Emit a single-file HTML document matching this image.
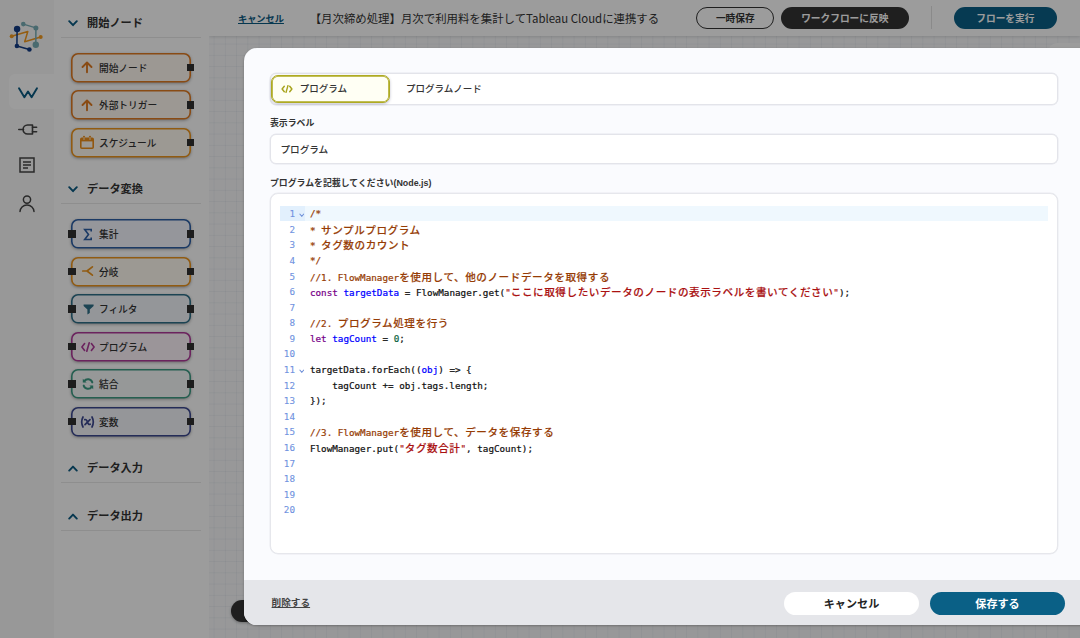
<!DOCTYPE html>
<html lang="ja">
<head>
<meta charset="utf-8">
<title>プログラムノード</title>
<style>
*{box-sizing:border-box;margin:0;padding:0}
html,body{width:1080px;height:638px;overflow:hidden;background:#f6f7fa}
body{font-family:"Liberation Sans","Noto Sans CJK JP",sans-serif;color:#333;position:relative}
.jp{font-family:"Noto Sans CJK JP","Liberation Sans",sans-serif}
#app{position:absolute;left:0;top:0;width:1080px;height:638px;overflow:hidden}
/* icon bar */
.iconbar{position:absolute;left:0;top:0;width:54px;height:638px;background:#f9f9f9}
.iconbar .active{position:absolute;left:9px;top:74px;width:45px;height:35px;background:#fff;border-radius:6px 0 0 6px}
.iconbar svg{position:absolute;overflow:visible}
/* node panel */
.panel{position:absolute;left:53px;top:0;width:155.6px;height:638px;background:#fff}
.sec{position:absolute;left:8px;width:140px;height:31px;border-bottom:1px solid #e9e9e9}
.sec .t{position:absolute;left:26px;top:0;font-size:11.2px;font-weight:700;color:#333;line-height:31px;white-space:nowrap;font-family:"Noto Sans CJK JP",sans-serif}
.sec svg{position:absolute;left:7px;top:13px}
.node{position:absolute;left:18px;width:120px;height:29.6px}
.node .l{position:absolute;left:28px;top:0;line-height:30.6px;font-size:9.7px;font-weight:500;color:#333;white-space:nowrap;font-family:"Noto Sans CJK JP",sans-serif}
.node svg.bd{position:absolute;left:0;top:0;overflow:visible;filter:drop-shadow(0 1.5px 1.6px rgba(0,0,0,.32))}
.node svg.ic{position:absolute;left:10.5px;top:8.5px;overflow:visible}
.node i{position:absolute;width:7.4px;height:7.4px;background:#303030;top:11.3px}
.node i.r{left:116px}
.node i.lf{left:-2.7px}
/* topbar */
.topbar{position:absolute;left:209px;top:0;width:871px;height:36px;background:#fff;box-shadow:0 1px 3px rgba(0,0,0,.13)}
.topbar .cancel{position:absolute;left:29px;top:0;line-height:36px;font-size:9.2px;font-weight:700;color:#0a5a82;text-decoration:underline;font-family:"Noto Sans CJK JP",sans-serif}
.topbar .title{position:absolute;left:100.7px;top:0;line-height:36px;font-size:11.42px;color:#333;white-space:nowrap;font-family:"Noto Sans CJK JP",sans-serif}
.pill{position:absolute;top:6.7px;height:22.4px;border-radius:12px;font-size:9.7px;font-weight:700;text-align:center;line-height:21px;font-family:"Noto Sans CJK JP",sans-serif;white-space:nowrap}
.canvas{position:absolute;left:209px;top:36px;width:871px;height:602px;background-color:#f8f9fb;
background-image:linear-gradient(to right,rgba(110,120,150,.07) 1px,transparent 1px),linear-gradient(to bottom,rgba(110,120,150,.07) 1px,transparent 1px);background-size:11.25px 11.25px;background-position:4.6px 7.6px}
.overlay{position:absolute;left:0;top:0;width:1080px;height:638px;background:rgba(0,0,0,.39)}
/* modal */
.modal{position:absolute;left:244px;top:48px;width:860px;height:577px;background:#fafbfe;border-radius:13px;box-shadow:0 1px 2.5px rgba(0,0,0,.28);overflow:hidden}
.tabs{position:absolute;left:26px;top:25px;width:788px;height:31.5px;border:1px solid #e3e4ea;border-radius:6px;background:#fff;box-shadow:0 0 0 .45px #e6e7ed}
.tab-on{position:absolute;left:.2px;top:.6px;width:119px;height:28px;border:1px solid #aeaa22;border-radius:7px;background:#fffff4;box-shadow:inset 0 0 0 .8px #aeaa22,0 1px 3px rgba(40,40,90,.28)}
.tabs .tx{position:absolute;top:0;line-height:29px;font-size:9.5px;font-weight:500;color:#333;white-space:nowrap;font-family:"Noto Sans CJK JP",sans-serif}
.lab{position:absolute;left:26px;font-size:8.9px;font-weight:700;color:#333;white-space:nowrap;line-height:12px;font-family:"Liberation Sans","Noto Sans CJK JP",sans-serif}
.inp{position:absolute;left:26px;top:86px;width:788px;height:30px;border:1px solid #e3e4ea;border-radius:6px;background:#fff;box-shadow:0 0 0 .45px #e6e7ed;font-size:9.65px;font-weight:500;line-height:28.6px;padding-left:9.4px;color:#333;font-family:"Noto Sans CJK JP",sans-serif}
.editor{position:absolute;left:26px;top:145px;width:788px;height:361px;border:1px solid #e6e7ec;border-radius:8px;background:#fff;box-shadow:0 0 0 .45px #e9eaef}
.foot{position:absolute;left:0;top:532px;width:860px;height:45px;background:#e5e6ea}
.foot .del{position:absolute;left:27.6px;top:0;line-height:45px;font-size:9.65px;font-weight:700;color:#444;text-decoration:underline;font-family:"Noto Sans CJK JP",sans-serif}
.fbtn{position:absolute;top:11.5px;height:23px;border-radius:12px;font-size:11.1px;font-weight:700;text-align:center;line-height:23.4px;font-family:"Noto Sans CJK JP",sans-serif}
/* code */
.code{position:absolute;left:8.6px;top:11.7px;width:768.4px;font-family:"DejaVu Sans Mono","Liberation Mono","Noto Sans CJK JP",monospace;font-size:9.27px;line-height:15.59px;color:#111;-webkit-text-stroke:.22px currentColor}
.ln{position:relative;height:15.59px;white-space:pre}
.ln.act{background:linear-gradient(to right,#e2f0fd 25px,#eff8fe 25px)}
.ln b{position:absolute;left:0;top:.6px;width:15.4px;text-align:right;font-weight:400;color:#6f92e0;-webkit-text-stroke:.1px currentColor}
.ln svg{position:absolute;left:19.2px;top:7.3px}
.ln span.c{position:absolute;left:30.3px;top:.6px}
.j{font-family:"Noto Sans CJK JP",sans-serif;font-weight:500;font-size:10.6px;letter-spacing:.55px;-webkit-text-stroke:.14px currentColor}
.cm{color:#963c05}.kw{color:#770088}.df{color:#0000ff}.st{color:#aa1111}.nu{color:#116644}
</style>
</head>
<body>
<div id="app">
  <div class="canvas"><div style="position:absolute;left:22px;top:564px;width:120px;height:22.4px;border-radius:11.2px;background:#333;box-shadow:0 1px 3px rgba(0,0,0,.3)"></div><div style="position:absolute;left:838.5px;top:6.6px;width:60px;height:60px;border-radius:9px;background:#fff"></div></div>
  <div class="topbar" id="topbar">
    <span class="cancel">キャンセル</span>
    <span class="title">【月次締め処理】月次で利用料を集計してTableau Cloudに連携する</span>
    <div class="pill" style="left:487.3px;width:78px;border:1px solid #333;color:#333">一時保存</div>
    <div class="pill" style="left:572px;width:127.5px;background:#333;color:#fff;line-height:22.4px">ワークフローに反映</div>
    <div style="position:absolute;left:722px;top:6px;width:1px;height:23px;background:#e2e2e2"></div>
    <div class="pill" style="left:744.5px;width:103.7px;background:#0a6086;color:#fff;line-height:22.4px">フローを実行</div>
  </div>
  <div class="panel" id="panel">
    <div class="sec" style="top:7px"><svg width="10" height="7" viewBox="0 0 10 7"><path d="M1.2 1.2 L5 5.2 L8.8 1.2" fill="none" stroke="#0a5a82" stroke-width="1.9" stroke-linecap="round" stroke-linejoin="round"/></svg><span class="t">開始ノード</span></div>
    <div class="node" style="top:52.5px"><svg class="bd" width="120" height="29.6"><rect x=".8" y=".8" width="118.4" height="28" rx="6.2" fill="#fff8f1" stroke="#e07b22" stroke-width="1.6"/></svg><svg class="ic" style="margin-left:-.7px" width="12" height="12" viewBox="0 0 12 12"><path d="M6 11.2 V1.8 M1.5 6 L6 1.5 L10.5 6" fill="none" stroke="#e07b22" stroke-width="1.9" stroke-linecap="round" stroke-linejoin="round"/></svg><span class="l">開始ノード</span><i class="r"></i></div>
    <div class="node" style="top:90px"><svg class="bd" width="120" height="29.6"><rect x=".8" y=".8" width="118.4" height="28" rx="6.2" fill="#fff8f1" stroke="#e07b22" stroke-width="1.6"/></svg><svg class="ic" style="margin-left:-.7px" width="12" height="12" viewBox="0 0 12 12"><path d="M6 11.2 V1.8 M1.5 6 L6 1.5 L10.5 6" fill="none" stroke="#e07b22" stroke-width="1.9" stroke-linecap="round" stroke-linejoin="round"/></svg><span class="l">外部トリガー</span><i class="r"></i></div>
    <div class="node" style="top:127.5px"><svg class="bd" width="120" height="29.6"><rect x=".8" y=".8" width="118.4" height="28" rx="6.2" fill="#fffaf0" stroke="#ee951c" stroke-width="1.6"/></svg><svg class="ic" style="margin-left:-1.2px;margin-top:-.3px" width="14" height="13" viewBox="0 0 14 13"><rect x=".8" y="2.400" width="12.400" height="9.800" rx="1" fill="none" stroke="#ee8f1a" stroke-width="1.600"/><path d="M.8 2.400 H13.200 V5.400 H.8 Z" fill="#ee8f1a"/><path d="M4 .9 V2.200 M10 .9 V2.200" stroke="#ee8f1a" stroke-width="2.200" stroke-linecap="round"/><path d="M4 1.300 V3.600 M10 1.300 V3.600" stroke="#fff4e4" stroke-width=".9" stroke-linecap="round"/></svg><span class="l">スケジュール</span><i class="r"></i></div>
    <div class="sec" style="top:173px"><svg width="10" height="7" viewBox="0 0 10 7"><path d="M1.2 1.2 L5 5.2 L8.8 1.2" fill="none" stroke="#0a5a82" stroke-width="1.9" stroke-linecap="round" stroke-linejoin="round"/></svg><span class="t">データ変換</span></div>
    <div class="node" style="top:219px"><svg class="bd" width="120" height="29.6"><rect x=".8" y=".8" width="118.4" height="28" rx="6.2" fill="#f3f5fd" stroke="#2d5fa6" stroke-width="1.6"/></svg><i class="lf"></i><svg class="ic" style="margin-left:1.2px;margin-top:.2px" width="10" height="13" viewBox="0 0 10 13"><path d="M8.200 3.600 V1.500 H1.700 L5.500 6.500 L1.700 11.500 H8.200 V9.400" fill="none" stroke="#2d5fa6" stroke-width="1.600" stroke-linejoin="miter" stroke-linecap="butt"/></svg><span class="l">集計</span><i class="r"></i></div>
    <div class="node" style="top:256.5px"><svg class="bd" width="120" height="29.6"><rect x=".8" y=".8" width="118.4" height="28" rx="6.2" fill="#fffaf0" stroke="#ee951c" stroke-width="1.6"/></svg><i class="lf"></i><svg class="ic" width="12" height="12" viewBox="0 0 12 12"><path d="M.8 6 H5 L10.4 1.8 M5 6 L10.4 10.2" fill="none" stroke="#ee951c" stroke-width="1.7" stroke-linecap="round" stroke-linejoin="round"/></svg><span class="l">分岐</span><i class="r"></i></div>
    <div class="node" style="top:294px"><svg class="bd" width="120" height="29.6"><rect x=".8" y=".8" width="118.4" height="28" rx="6.2" fill="#f2f6fb" stroke="#2f6f88" stroke-width="1.6"/></svg><i class="lf"></i><svg class="ic" width="12" height="12" viewBox="0 0 12 12"><path d="M1.6 1.6 H11.6 V3 L7.8 6.600 V10 L5.4 11.4 V6.600 L1.6 3 Z" fill="#2f6f88"/></svg><span class="l">フィルタ</span><i class="r"></i></div>
    <div class="node" style="top:331.5px"><svg class="bd" width="120" height="29.6"><rect x=".8" y=".8" width="118.4" height="28" rx="6.2" fill="#fdf3fa" stroke="#b03a9a" stroke-width="1.6"/></svg><i class="lf"></i><svg class="ic" style="margin-left:-1px;margin-top:1.6px" width="14" height="10" viewBox="0 0 14 10"><path d="M3.6 1.6 L.9 5 L3.6 8.4 M10.4 1.6 L13.1 5 L10.4 8.4 M8.2 .8 L5.8 9.2" fill="none" stroke="#b03a9a" stroke-width="1.600" stroke-linecap="round" stroke-linejoin="round"/></svg><span class="l">プログラム</span><i class="r"></i></div>
    <div class="node" style="top:369px"><svg class="bd" width="120" height="29.6"><rect x=".8" y=".8" width="118.4" height="28" rx="6.2" fill="#f5f8f8" stroke="#3d9b84" stroke-width="1.6"/></svg><i class="lf"></i><svg class="ic" width="12" height="12" viewBox="0 0 12 12"><g fill="none" stroke="#3d9b84" stroke-width="2" stroke-linecap="round" stroke-linejoin="round"><path d="M10.3 4.4 A4.6 4.6 0 0 0 2.2 3.2"/><path d="M1.7 7.6 A4.6 4.6 0 0 0 9.8 8.8"/></g><path d="M.8 .8 V4.6 H4.6 Z M11.2 11.2 V7.4 H7.4 Z" fill="#3d9b84"/></svg><span class="l">結合</span><i class="r"></i></div>
    <div class="node" style="top:406.5px"><svg class="bd" width="120" height="29.6"><rect x=".8" y=".8" width="118.4" height="28" rx="6.2" fill="#f4f5fb" stroke="#3c4890" stroke-width="1.6"/></svg><i class="lf"></i><svg class="ic" style="margin-left:-1.2px;margin-top:1.2px" width="15" height="12" viewBox="0 0 15 12"><g fill="none" stroke="#3c4890" stroke-width="1.7" stroke-linecap="round"><path d="M3 1 Q.4 6 3 11"/><path d="M12 1 Q14.6 6 12 11"/><path d="M4.8 3.6 Q6.4 3 7.2 5.600 Q8.4 9.4 10.2 8.2 M10 3.6 L5 8.600"/></g></svg><span class="l">変数</span><i class="r"></i></div>
    <div class="sec" style="top:451.6px"><svg width="10" height="7" viewBox="0 0 10 7"><path d="M1.2 5.6 L5 1.6 L8.8 5.6" fill="none" stroke="#0a5a82" stroke-width="1.9" stroke-linecap="round" stroke-linejoin="round"/></svg><span class="t">データ入力</span></div>
    <div class="sec" style="top:500px"><svg width="10" height="7" viewBox="0 0 10 7"><path d="M1.2 5.6 L5 1.6 L8.8 5.6" fill="none" stroke="#0a5a82" stroke-width="1.9" stroke-linecap="round" stroke-linejoin="round"/></svg><span class="t">データ出力</span></div>
  </div>
  <div class="iconbar" id="iconbar">
    <div class="active"></div>
    <svg style="left:8px;top:20px" width="36" height="34" viewBox="8 20 36 34">
      <g fill="none" stroke-linecap="round" stroke-linejoin="round">
        <path d="M11.7 36.2 L27.8 31.5 L24.7 41.7 L40.7 37" stroke="#f29a1f" stroke-width="1.5"/>
        <path d="M17.1 29 L16.9 46 L29.4 49.5" stroke="#123c85" stroke-width="1.5"/>
        <path d="M23.3 24.1 L35.9 27.9 L35.8 44.8" stroke="#78adb6" stroke-width="1.5"/>
      </g>
      <circle cx="11.7" cy="36.2" r="2" fill="#f29a1f"/><circle cx="40.7" cy="37" r="2" fill="#f29a1f"/>
      <circle cx="17.1" cy="29" r="3.2" fill="#123c85"/><circle cx="16.9" cy="46" r="2.3" fill="#123c85"/><circle cx="29.4" cy="49.5" r="2.3" fill="#123c85"/>
      <circle cx="23.3" cy="24.1" r="2.3" fill="#78adb6"/><circle cx="35.9" cy="27.9" r="2.5" fill="#78adb6"/><circle cx="35.8" cy="44.8" r="3.2" fill="#78adb6"/>
    </svg>
    <svg style="left:18px;top:87px" width="20" height="12" viewBox="0 0 20 12"><path d="M1 1.2 L6.4 10.3 L10 4.6 L13.6 10.3 L19 1.2" fill="none" stroke="#0a5a82" stroke-width="1.9" stroke-linecap="round" stroke-linejoin="round"/></svg>
    <svg style="left:18px;top:123px" width="20" height="13" viewBox="0 0 20 13"><g fill="none" stroke="#444" stroke-width="1.6" stroke-linecap="round" stroke-linejoin="round"><path d="M0.8 6.5 H5.5"/><path d="M14.5 2 H9.6 A4.5 4.5 0 0 0 9.6 11 H14.5 Z"/><path d="M14.5 4.2 H18.6 M14.5 8.8 H18.6"/></g></svg>
    <svg style="left:19px;top:157px" width="16" height="16" viewBox="0 0 16 16"><g fill="none" stroke="#444" stroke-width="1.5"><rect x="1" y="1" width="14" height="14"/><path d="M4 5 H12 M4 8 H12 M4 11 H9"/></g></svg>
    <svg style="left:19px;top:195px" width="16" height="18" viewBox="0 0 16 18"><g fill="none" stroke="#444" stroke-width="1.5" stroke-linecap="round"><circle cx="8" cy="4.6" r="3.6"/><path d="M1 16.6 A7 6.6 0 0 1 15 16.6"/></g></svg>
  </div>
</div>
<div class="overlay"></div>
<div class="modal" id="modal">
  <div class="tabs">
    <div class="tab-on"><svg style="position:absolute;left:8.4px;top:9px" width="12" height="8" viewBox="0 0 14 10"><path d="M3.6 1.6 L.9 5 L3.6 8.4 M10.4 1.6 L13.1 5 L10.4 8.4 M8.2 .8 L5.8 9.2" fill="none" stroke="#a8a41e" stroke-width="1.8" stroke-linecap="round" stroke-linejoin="round"/></svg><span class="tx" style="left:27.6px;line-height:25px">プログラム</span></div>
    <span class="tx" style="left:135px">プログラムノード</span>
  </div>
  <div class="lab" style="top:68.5px">表示ラベル</div>
  <div class="inp">プログラム</div>
  <div class="lab" style="top:128.5px">プログラムを記載してください(Node.js)</div>
  <div class="editor">
    <div class="code">
      <div class="ln act"><b>1</b><svg width="5.6" height="4.4" viewBox="0 0 5 4"><path d="M.5 .7 L2.5 3 L4.5 .7" fill="none" stroke="#6d8fd8" stroke-width=".95"/></svg><span class="c"><span class="cm">/*</span></span></div>
      <div class="ln"><b>2</b><span class="c"><span class="cm">* <span class="j">サンプルプログラム</span></span></span></div>
      <div class="ln"><b>3</b><span class="c"><span class="cm">* <span class="j">タグ数のカウント</span></span></span></div>
      <div class="ln"><b>4</b><span class="c"><span class="cm">*/</span></span></div>
      <div class="ln"><b>5</b><span class="c"><span class="cm">//1. FlowManager<span class="j">を使用して、他のノードデータを取得する</span></span></span></div>
      <div class="ln"><b>6</b><span class="c"><span class="kw">const</span> <span class="df">targetData</span> = FlowManager.get(<span class="st">"<span class="j">ここに取得したいデータのノードの表示ラベルを書いてください</span>"</span>);</span></div>
      <div class="ln"><b>7</b><span class="c"></span></div>
      <div class="ln"><b>8</b><span class="c"><span class="cm">//2. <span class="j">プログラム処理を行う</span></span></span></div>
      <div class="ln"><b>9</b><span class="c"><span class="kw">let</span> <span class="df">tagCount</span> = <span class="nu">0</span>;</span></div>
      <div class="ln"><b>10</b><span class="c"></span></div>
      <div class="ln"><b>11</b><svg width="5.6" height="4.4" viewBox="0 0 5 4"><path d="M.5 .7 L2.5 3 L4.5 .7" fill="none" stroke="#6d8fd8" stroke-width=".95"/></svg><span class="c">targetData.forEach((<span class="df">obj</span>) =&gt; {</span></div>
      <div class="ln"><b>12</b><span class="c">    tagCount += obj.tags.length;</span></div>
      <div class="ln"><b>13</b><span class="c">});</span></div>
      <div class="ln"><b>14</b><span class="c"></span></div>
      <div class="ln"><b>15</b><span class="c"><span class="cm">//3. FlowManager<span class="j">を使用して、データを保存する</span></span></span></div>
      <div class="ln"><b>16</b><span class="c">FlowManager.put(<span class="st">"<span class="j">タグ数合計</span>"</span>, tagCount);</span></div>
      <div class="ln"><b>17</b><span class="c"></span></div>
      <div class="ln"><b>18</b><span class="c"></span></div>
      <div class="ln"><b>19</b><span class="c"></span></div>
      <div class="ln"><b>20</b><span class="c"></span></div>
    </div>
  </div>
  <div class="foot">
    <span class="del">削除する</span>
    <div class="fbtn" style="left:540px;width:135px;background:#fff;color:#222">キャンセル</div>
    <div class="fbtn" style="left:686px;width:135px;background:#0a6086;color:#fff">保存する</div>
  </div>
</div>
</body>
</html>
